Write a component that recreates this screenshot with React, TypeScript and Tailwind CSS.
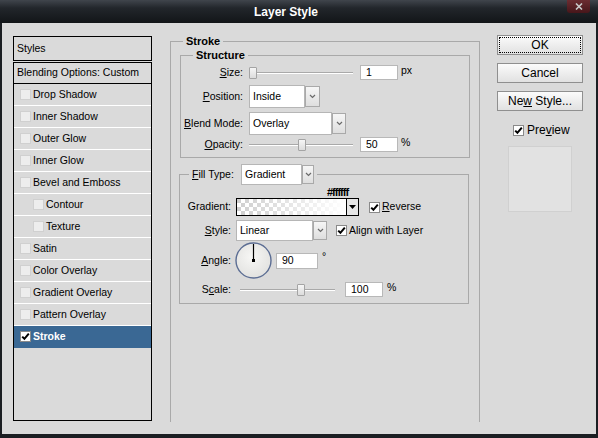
import type { ReactNode } from 'react'

const styleRows = [
  { label: 'Drop Shadow' },
  { label: 'Inner Shadow' },
  { label: 'Outer Glow' },
  { label: 'Inner Glow' },
  { label: 'Bevel and Emboss' },
  { label: 'Contour', indent: true },
  { label: 'Texture', indent: true },
  { label: 'Satin' },
  { label: 'Color Overlay' },
  { label: 'Gradient Overlay' },
  { label: 'Pattern Overlay' },
  { label: 'Stroke', checked: true, active: true },
]

function Check({ on = false }: { on?: boolean }) {
  return (
    <span
      className={`flex h-[11px] w-[11px] shrink-0 items-center justify-center border ${
        on ? 'border-[#8a8a8a] bg-white' : 'border-[#d0d0d0] bg-[#ededed]'
      }`}
    >
      {on && (
        <svg width="9" height="9" viewBox="0 0 9 9">
          <path d="M1.2 4.6 L3.4 6.8 L7.8 1.6" fill="none" stroke="#000" strokeWidth="2" />
        </svg>
      )}
    </span>
  )
}

function Chevron() {
  return (
    <svg width="7" height="5" viewBox="0 0 7 5">
      <path d="M1 1 L3.5 3.5 L6 1" fill="none" stroke="#6a6a6a" strokeWidth="1.2" />
    </svg>
  )
}

function Select({ value, box, arrow, h }: { value: string; box: string; arrow: string; h: string }) {
  return (
    <div className={`flex ${h}`}>
      <div className={`${box} flex items-center border border-[#b6b6b6] bg-white pl-[3px]`}>{value}</div>
      <div
        className={`${arrow} my-[1px] flex items-center justify-center border border-[#a9a9a9] bg-[linear-gradient(#f6f6f6,#dedede)]`}
      >
        <Chevron />
      </div>
    </div>
  )
}

function Field({ value, w, h = 'h-[15px]' }: { value: string; w: string; h?: string }) {
  return (
    <div className={`${w} ${h} flex shrink-0 items-center border border-[#b8b8b8] bg-white pl-[5px]`}>
      {value}
    </div>
  )
}

function Slider({ left, right }: { left: string; right: string }) {
  return (
    <div className="flex items-center">
      <div className={`${left} h-[2px] border-t border-[#a9a9a9] bg-white`} />
      <div className="h-[12px] w-[8px] shrink-0 rounded-[1px] border border-[#a4a4a4] bg-[linear-gradient(#f6f6f6,#dcdcdc)]" />
      <div className={`${right} h-[2px] border-t border-[#a9a9a9] bg-white`} />
    </div>
  )
}

function Label({ w, children }: { w: string; children: ReactNode }) {
  return <div className={`${w} shrink-0 text-right`}>{children}</div>
}

function Button({ children, focus = false }: { children: ReactNode; focus?: boolean }) {
  return (
    <button className="flex h-[20px] w-[86px] items-stretch border border-[#8f8f8f] bg-[linear-gradient(#fbfbfb,#e1e1e1)] p-[1px] text-[12px] text-black">
      <span
        className={`flex flex-1 items-center justify-center ${
          focus ? 'border border-dotted border-black' : ''
        }`}
      >
        <span>{children}</span>
      </span>
    </button>
  )
}

function GradientBar() {
  return (
    <svg width="109" height="16" viewBox="0 0 109 16" className="block">
      <defs>
        <pattern id="chk" width="8" height="8" patternUnits="userSpaceOnUse">
          <rect width="8" height="8" fill="#ffffff" />
          <rect width="4" height="4" fill="#cfcfcf" />
          <rect x="4" y="4" width="4" height="4" fill="#cfcfcf" />
        </pattern>
        <linearGradient id="fade" x1="0" x2="1" y1="0" y2="0">
          <stop offset="0" stopColor="#fff" stopOpacity="0" />
          <stop offset="1" stopColor="#fff" stopOpacity="1" />
        </linearGradient>
      </defs>
      <rect width="109" height="16" fill="url(#chk)" />
      <rect width="109" height="16" fill="url(#fade)" />
    </svg>
  )
}

function AngleDial() {
  return (
    <svg width="37" height="37" viewBox="0 0 37 37" className="block shrink-0">
      <defs>
        <radialGradient id="dial" cx="0.45" cy="0.4" r="0.6">
          <stop offset="0" stopColor="#f7f7f5" />
          <stop offset="1" stopColor="#e2e2e0" />
        </radialGradient>
      </defs>
      <circle cx="18.5" cy="18.5" r="17.5" fill="url(#dial)" stroke="#5b6d93" strokeWidth="1.4" />
      <line x1="18.5" y1="18.5" x2="18.5" y2="2" stroke="#000" strokeWidth="1.2" />
      <rect x="17" y="17" width="3" height="3" fill="#000" />
    </svg>
  )
}

export default function App() {
  return (
    <div className="flex h-[438px] w-[598px] flex-col bg-[#1b1e22] font-['Liberation_Sans','DejaVu_Sans',sans-serif] text-[10.5px] text-black">
      {/* title bar */}
      <div className="flex h-[23px] shrink-0 bg-[linear-gradient(#40454c,#22262b_35%,#121518)]">
        <div className="flex items-center pl-[254px] text-[12px] font-bold text-white">Layer Style</div>
        <div className="ml-auto mr-[8px] flex h-[13px] w-[23px] items-center justify-center rounded-b-[3px] bg-[linear-gradient(#6b2c31,#47161a)]">
          <svg width="8" height="7" viewBox="0 0 8 7">
            <path d="M1 0.5 L7 6.5 M7 0.5 L1 6.5" stroke="#c9c9c9" strokeWidth="1.6" />
          </svg>
        </div>
      </div>

      {/* body */}
      <div className="mx-[2px] mb-[4px] flex flex-1 bg-[#dadada]">
        {/* style list */}
        <div className="ml-[11px] mt-[13px] mb-[13px] flex w-[139px] flex-col">
          <div className="flex h-[25px] items-center border border-black pl-[3px]">Styles</div>
          <div className="mt-[1px] flex flex-1 flex-col border border-black">
            <div className="flex h-[21px] items-center border-b border-black pl-[3px]">Blending Options: Custom</div>
            {styleRows.map((r) => (
              <div
                key={r.label}
                className={`flex h-[22px] items-center gap-[2px] border-b ${
                  r.active ? 'border-[#3a6894] bg-[#3a6894] font-bold text-white' : 'border-white'
                } ${r.indent ? 'pl-[19px]' : 'pl-[6px]'}`}
              >
                <Check on={r.checked} />
                <span>{r.label}</span>
              </div>
            ))}
          </div>
        </div>

        {/* stroke settings */}
        <fieldset className="mt-[12px] mb-[12px] ml-[18px] w-[310px] border border-b-0 border-[#a9a9a9]">
          <legend className="ml-[12px] px-[3px] text-[11px] font-bold leading-[13px]">Stroke</legend>

          <fieldset className="mx-[9px] mt-[1px] border border-[#a9a9a9]">
            <legend className="ml-[12px] px-[3px] text-[11px] font-bold leading-[13px]">Structure</legend>
            <div className="flex flex-col pt-[3px] pb-[5px]">
              <div className="flex h-[15px] items-center">
                <Label w="w-[62px]">
                  <u>S</u>ize:
                </Label>
                <div className="ml-[6px]">
                  <Slider left="w-0" right="w-[96px]" />
                </div>
                <div className="ml-[7px]">
                  <Field value="1" w="w-[38px]" />
                </div>
                <span className="ml-[3px] -mt-[3px]">px</span>
              </div>
              <div className="mt-[5px] flex h-[23px] items-center">
                <Label w="w-[62px]">
                  <u>P</u>osition:
                </Label>
                <div className="ml-[6px]">
                  <Select value="Inside" box="w-[56px]" arrow="w-[15px]" h="h-[23px]" />
                </div>
              </div>
              <div className="mt-[4px] flex h-[23px] items-center">
                <Label w="w-[62px]">
                  <u>B</u>lend Mode:
                </Label>
                <div className="ml-[6px]">
                  <Select value="Overlay" box="w-[83px]" arrow="w-[14px]" h="h-[23px]" />
                </div>
              </div>
              <div className="mt-[2px] flex h-[15px] items-center">
                <Label w="w-[62px]">
                  <u>O</u>pacity:
                </Label>
                <div className="ml-[6px]">
                  <Slider left="w-[49px]" right="w-[47px]" />
                </div>
                <div className="ml-[7px]">
                  <Field value="50" w="w-[38px]" />
                </div>
                <span className="ml-[3px] -mt-[3px]">%</span>
              </div>
            </div>
          </fieldset>

          <fieldset className="ml-[8px] mr-[10px] mt-[6px] border border-[#a9a9a9]">
            <legend className="ml-[9px] flex items-center px-[3px]">
              <span className="w-[49px]">
                <u>F</u>ill Type:
              </span>
              <Select value="Gradient" box="w-[61px]" arrow="w-[12px]" h="h-[21px]" />
            </legend>
            <div className="flex flex-col pt-[1px] pb-[6px]">
              <div className="flex h-[12px] items-center pl-[147px] text-[11px] font-bold tracking-[-1px]">#ffffff</div>
              <div className="flex h-[18px] items-center">
                <Label w="w-[51px]">Gradient:</Label>
                <div className="ml-[5px] flex">
                  <div className="border border-black">
                    <GradientBar />
                  </div>
                  <div className="flex w-[12px] items-center justify-center border border-l-0 border-black bg-[#e6e6e6]">
                    <svg width="7" height="4" viewBox="0 0 7 4">
                      <path d="M0 0 L7 0 L3.5 4 Z" fill="#000" />
                    </svg>
                  </div>
                </div>
                <div className="ml-[10px] flex items-center gap-[2px]">
                  <Check on />
                  <span>
                    <u>R</u>everse
                  </span>
                </div>
              </div>
              <div className="mt-[4px] flex h-[21px] items-center">
                <Label w="w-[51px]">
                  <u>S</u>tyle:
                </Label>
                <div className="ml-[5px]">
                  <Select value="Linear" box="w-[77px]" arrow="w-[14px]" h="h-[21px]" />
                </div>
                <div className="ml-[9px] flex items-center gap-[2px]">
                  <Check on />
                  <span>
                    Ali<u>g</u>n with Layer
                  </span>
                </div>
              </div>
              <div className="mt-[1px] flex h-[37px] items-center">
                <Label w="w-[51px]">
                  <u>A</u>ngle:
                </Label>
                <div className="ml-[4px]">
                  <AngleDial />
                </div>
                <div className="ml-[4px]">
                  <Field value="90" w="w-[42px]" h="h-[16px]" />
                </div>
                <span className="ml-[4px] -mt-[8px]">°</span>
              </div>
              <div className="mt-[3px] flex h-[15px] items-center">
                <Label w="w-[51px]">
                  S<u>c</u>ale:
                </Label>
                <div className="ml-[9px]">
                  <Slider left="w-[57px]" right="w-[30px]" />
                </div>
                <div className="ml-[10px]">
                  <Field value="100" w="w-[38px]" />
                </div>
                <span className="ml-[4px] -mt-[3px]">%</span>
              </div>
            </div>
          </fieldset>
        </fieldset>

        {/* buttons */}
        <div className="ml-[17px] mt-[12px] flex w-[86px] flex-col">
          <Button focus>OK</Button>
          <div className="mt-[8px]">
            <Button>Cancel</Button>
          </div>
          <div className="mt-[8px]">
            <Button>
              Ne<u>w</u> Style...
            </Button>
          </div>
          <div className="mt-[10px] flex items-center gap-[3px] pl-[16px] text-[12px]">
            <Check on />
            <span>
              Pre<u>v</u>iew
            </span>
          </div>
          <div className="ml-[11px] mt-[7px] h-[66px] w-[64px] border border-[#d0d0d0] bg-[#e2e2e2]" />
        </div>
      </div>
    </div>
  )
}
